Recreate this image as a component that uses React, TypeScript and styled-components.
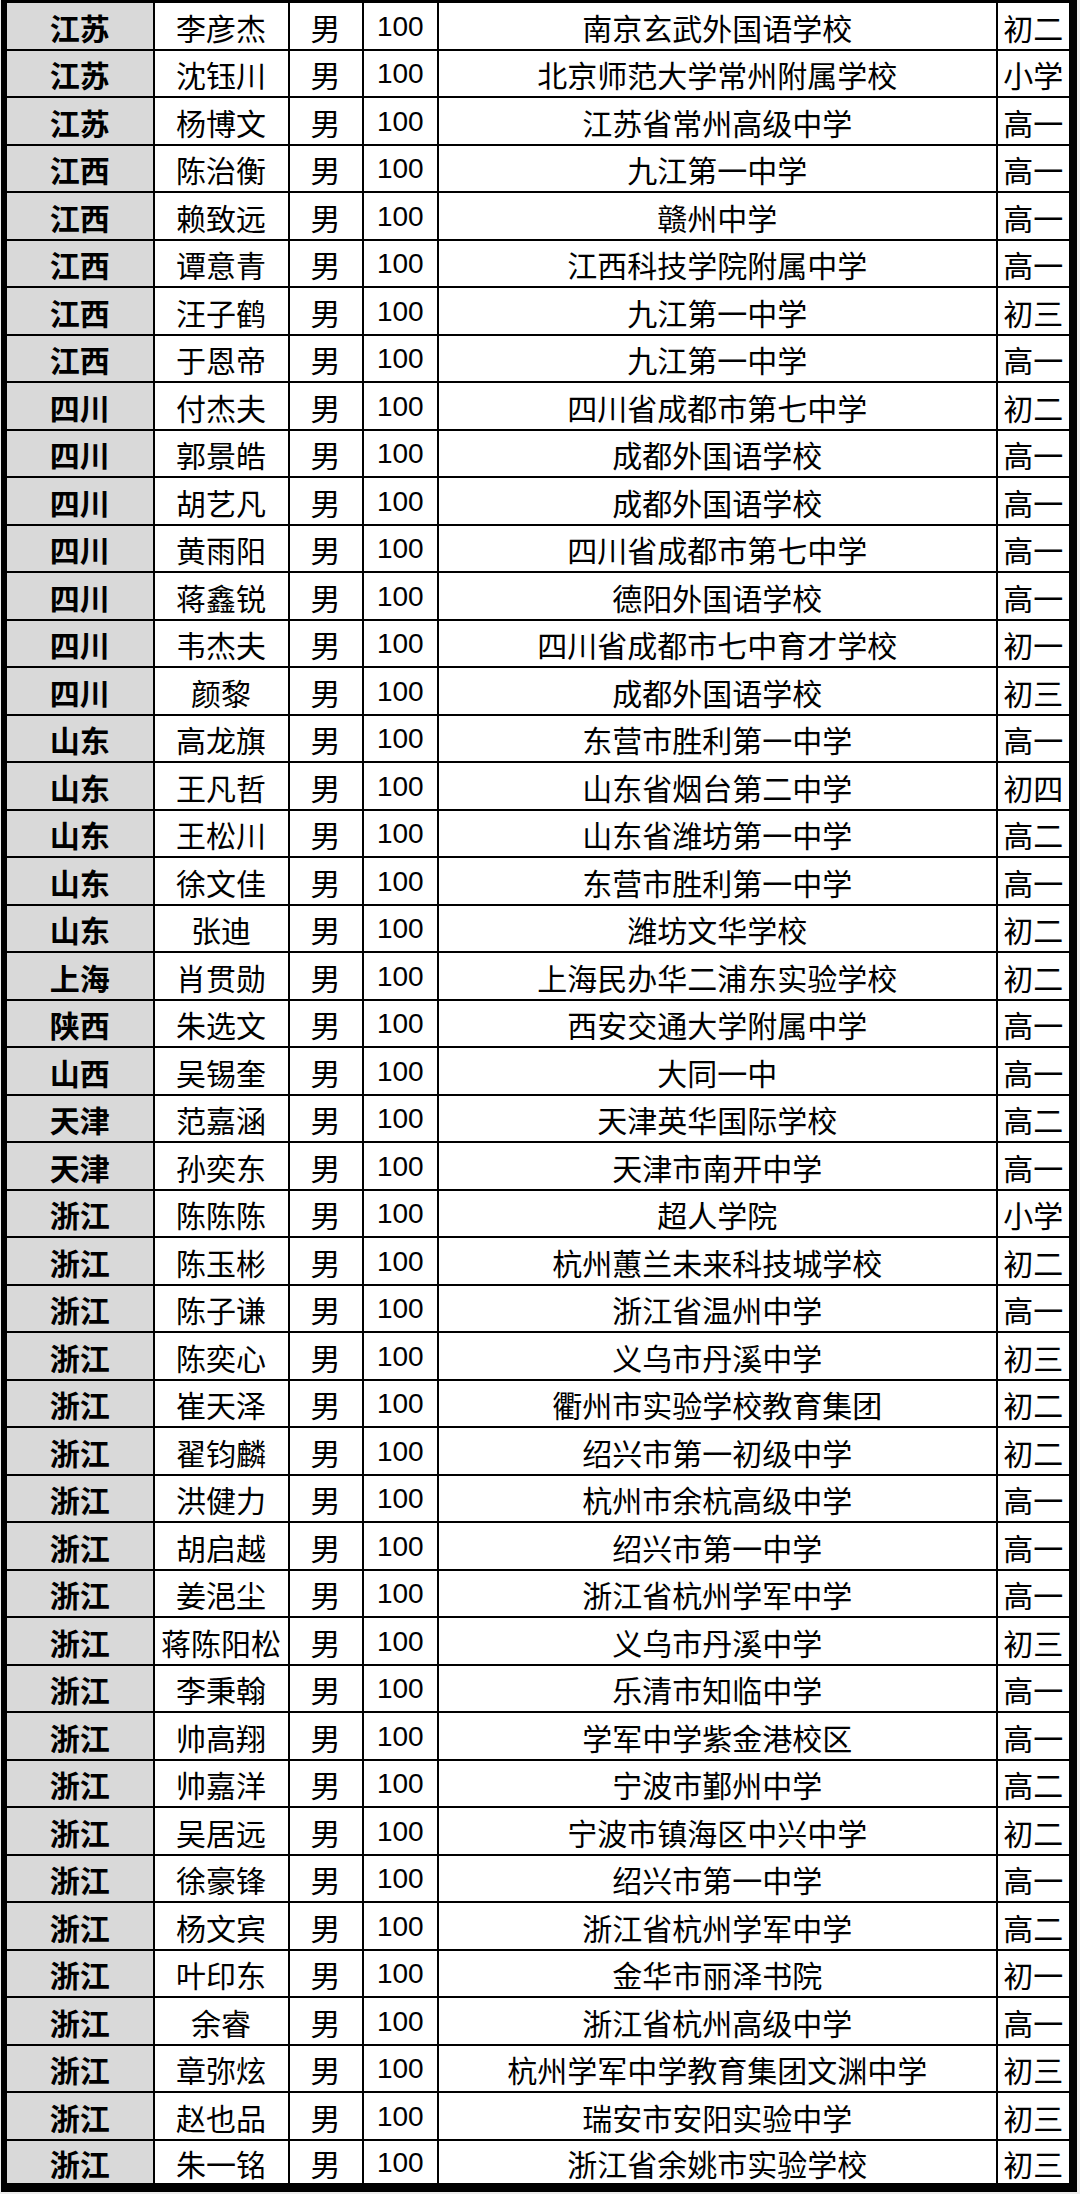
import React from "react";
import styled, { createGlobalStyle } from "styled-components";

const Global = createGlobalStyle`
  html, body { margin: 0; padding: 0; background: #ececec; }
  body { font-family: "Noto Sans CJK SC", "Liberation Sans", sans-serif; }
`;

const Page = styled.div`
  width: 1080px;
  height: 2194px;
  padding-left: 1px;
  box-sizing: border-box;
`;

const Table = styled.div`
  width: 1076px;
  box-sizing: border-box;
  border-style: solid;
  border-color: #000;
  border-width: 3px 8px 9px 6px;
  background: #000;
  display: grid;
  grid-template-columns: 145.5px 133px 72px 73.5px 556.5px 71.5px;
  grid-template-rows: repeat(45, 45.5px) 42px;
  gap: 2px;
`;

const Cell = styled.div<{ $gray?: boolean; $bold?: boolean; $num?: boolean }>`
  background: ${(p) => (p.$gray ? "#d9d9d9" : "#ffffff")};
  display: flex;
  align-items: center;
  justify-content: center;
  white-space: nowrap;
  color: #000;
  font-family: ${(p) =>
    p.$num
      ? '"Liberation Sans", "Noto Sans CJK SC", sans-serif'
      : '"Noto Sans CJK SC", "Liberation Sans", sans-serif'};
  font-size: ${(p) => (p.$num ? "28px" : "30px")};
  font-weight: ${(p) => (p.$bold ? 700 : 400)};
  line-height: 1.2;
  padding-top: 2px;
  box-sizing: border-box;
  min-width: 0;
`;

const rows: [string, string, string, string][] = [
  ["江苏", "李彦杰", "南京玄武外国语学校", "初二"],
  ["江苏", "沈钰川", "北京师范大学常州附属学校", "小学"],
  ["江苏", "杨博文", "江苏省常州高级中学", "高一"],
  ["江西", "陈治衡", "九江第一中学", "高一"],
  ["江西", "赖致远", "赣州中学", "高一"],
  ["江西", "谭意青", "江西科技学院附属中学", "高一"],
  ["江西", "汪子鹤", "九江第一中学", "初三"],
  ["江西", "于恩帝", "九江第一中学", "高一"],
  ["四川", "付杰夫", "四川省成都市第七中学", "初二"],
  ["四川", "郭景皓", "成都外国语学校", "高一"],
  ["四川", "胡艺凡", "成都外国语学校", "高一"],
  ["四川", "黄雨阳", "四川省成都市第七中学", "高一"],
  ["四川", "蒋鑫锐", "德阳外国语学校", "高一"],
  ["四川", "韦杰夫", "四川省成都市七中育才学校", "初一"],
  ["四川", "颜黎", "成都外国语学校", "初三"],
  ["山东", "高龙旗", "东营市胜利第一中学", "高一"],
  ["山东", "王凡哲", "山东省烟台第二中学", "初四"],
  ["山东", "王松川", "山东省潍坊第一中学", "高二"],
  ["山东", "徐文佳", "东营市胜利第一中学", "高一"],
  ["山东", "张迪", "潍坊文华学校", "初二"],
  ["上海", "肖贯勋", "上海民办华二浦东实验学校", "初二"],
  ["陕西", "朱选文", "西安交通大学附属中学", "高一"],
  ["山西", "吴锡奎", "大同一中", "高一"],
  ["天津", "范嘉涵", "天津英华国际学校", "高二"],
  ["天津", "孙奕东", "天津市南开中学", "高一"],
  ["浙江", "陈陈陈", "超人学院", "小学"],
  ["浙江", "陈玉彬", "杭州蕙兰未来科技城学校", "初二"],
  ["浙江", "陈子谦", "浙江省温州中学", "高一"],
  ["浙江", "陈奕心", "义乌市丹溪中学", "初三"],
  ["浙江", "崔天泽", "衢州市实验学校教育集团", "初二"],
  ["浙江", "翟钧麟", "绍兴市第一初级中学", "初二"],
  ["浙江", "洪健力", "杭州市余杭高级中学", "高一"],
  ["浙江", "胡启越", "绍兴市第一中学", "高一"],
  ["浙江", "姜浥尘", "浙江省杭州学军中学", "高一"],
  ["浙江", "蒋陈阳松", "义乌市丹溪中学", "初三"],
  ["浙江", "李秉翰", "乐清市知临中学", "高一"],
  ["浙江", "帅高翔", "学军中学紫金港校区", "高一"],
  ["浙江", "帅嘉洋", "宁波市鄞州中学", "高二"],
  ["浙江", "吴居远", "宁波市镇海区中兴中学", "初二"],
  ["浙江", "徐豪锋", "绍兴市第一中学", "高一"],
  ["浙江", "杨文宾", "浙江省杭州学军中学", "高二"],
  ["浙江", "叶印东", "金华市丽泽书院", "初一"],
  ["浙江", "余睿", "浙江省杭州高级中学", "高一"],
  ["浙江", "章弥炫", "杭州学军中学教育集团文渊中学", "初三"],
  ["浙江", "赵也品", "瑞安市安阳实验中学", "初三"],
  ["浙江", "朱一铭", "浙江省余姚市实验学校", "初三"],
];

export default function App() {
  return (
    <>
      <Global />
      <Page>
        <Table>
          {rows.map(([prov, name, school, grade], i) => (
            <React.Fragment key={i}>
              <Cell $gray $bold>{prov}</Cell>
              <Cell>{name}</Cell>
              <Cell>男</Cell>
              <Cell $num>100</Cell>
              <Cell>{school}</Cell>
              <Cell>{grade}</Cell>
            </React.Fragment>
          ))}
        </Table>
      </Page>
    </>
  );
}
